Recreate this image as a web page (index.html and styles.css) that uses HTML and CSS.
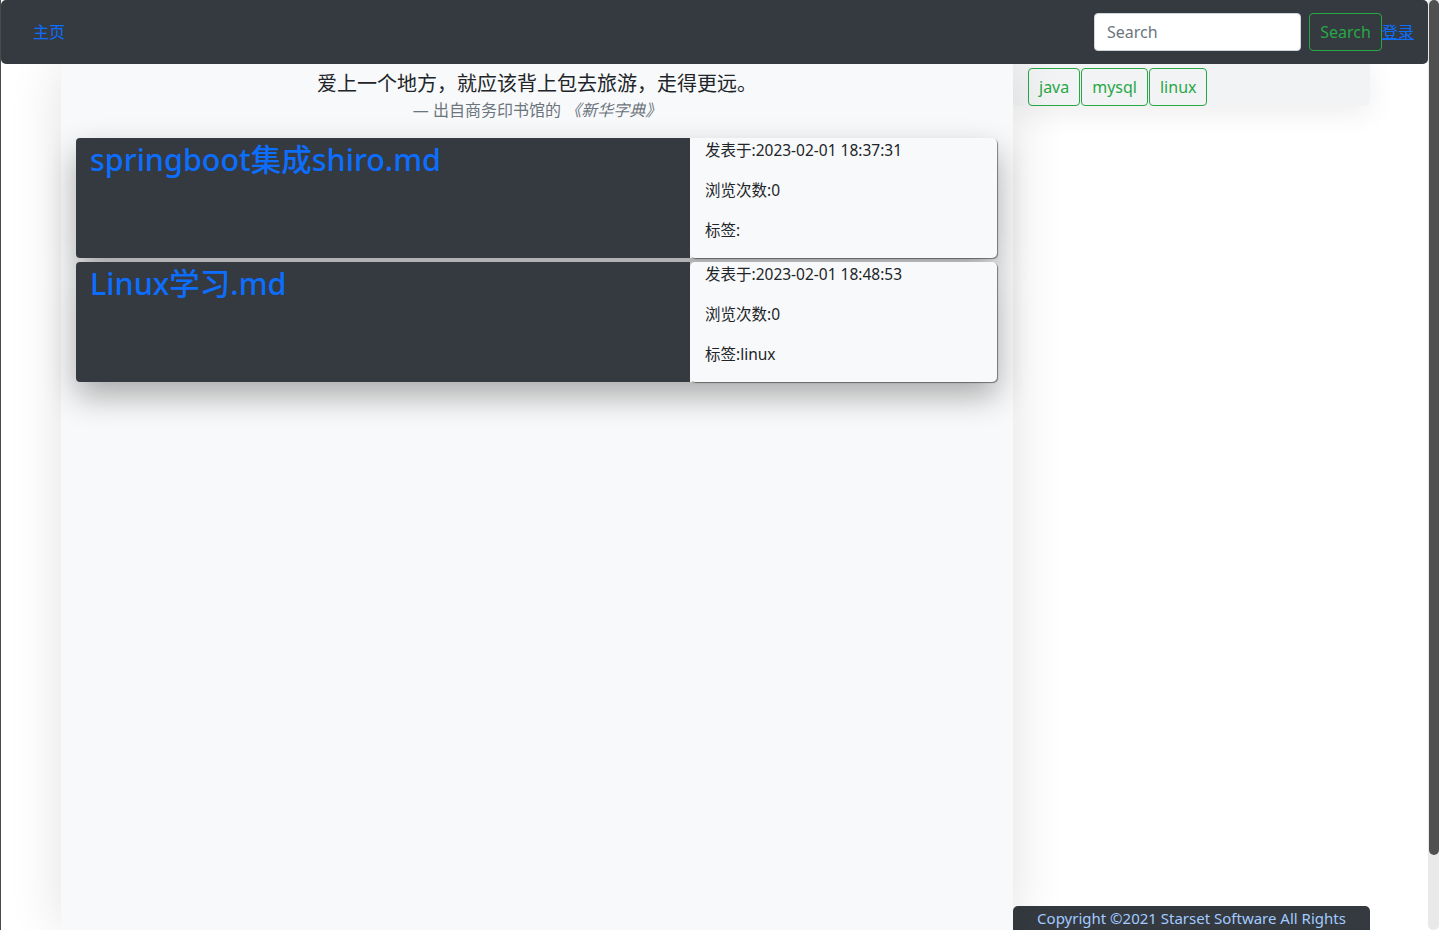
FILE: index.html
```html
<!DOCTYPE html>
<html lang="zh-CN">
<head>
<meta charset="utf-8">
<title>首页</title>
<link rel="stylesheet" href="styles.css">
</head>
<body>
<div class="frame">
  <div class="viewport">
    <nav class="navbar">
      <a class="nav-home" href="#">主页</a>
      <form class="nav-search">
        <input class="search-input" type="text" placeholder="Search">
        <button class="btn-search" type="button">Search</button>
      </form>
      <a class="nav-login" href="#">登录</a>
    </nav>
    <div class="layout">
      <div class="gutter"></div>
      <main class="main">
        <figure class="quote">
          <blockquote class="quote-text">爱上一个地方，就应该背上包去旅游，走得更远。</blockquote>
          <figcaption class="quote-source">— 出自商务印书馆的 <cite>《新华字典》</cite></figcaption>
        </figure>
        <div class="posts">
          <article class="post">
            <div class="post-title-box"><a class="post-title" href="#">springboot集成shiro.md</a></div>
            <div class="post-meta">
              <p>发表于:2023-02-01 18:37:31</p>
              <p>浏览次数:0</p>
              <p>标签:</p>
            </div>
          </article>
          <article class="post">
            <div class="post-title-box"><a class="post-title" href="#">Linux学习.md</a></div>
            <div class="post-meta">
              <p>发表于:2023-02-01 18:48:53</p>
              <p>浏览次数:0</p>
              <p>标签:linux</p>
            </div>
          </article>
        </div>
      </main>
      <aside class="side">
        <div class="tags">
          <button class="tag" type="button">java</button><button class="tag" type="button">mysql</button><button class="tag" type="button">linux</button>
        </div>
        <div class="side-fill"></div>
        <footer class="footer">Copyright ©2021 Starset Software All Rights</footer>
      </aside>
      <div class="right-gap"></div>
    </div>
  </div>
  <div class="scrollbar"><div class="thumb"></div></div>
</div>
</body>
</html>
```
FILE: styles.css
```css
* { box-sizing: border-box; }
html, body { margin: 0; padding: 0; }
body {
  height: 930px;
  overflow: hidden;
  background: #ffffff;
  border-left: 1px solid #4a4a4a;
  font-family: "Noto Sans", "Noto Sans CJK SC", sans-serif;
  font-size: 16px;
  line-height: 1.5;
  color: #212529;
}
.frame { display: flex; height: 930px; }
.viewport { flex: 1; display: flex; flex-direction: column; min-width: 0; }
.navbar {
  height: 64px;
  flex: 0 0 64px;
  background: #343a40;
  border-radius: 5px;
  display: flex;
  align-items: center;
  padding: 0 0 0 32px;
  position: relative;
  z-index: 3;
}
.nav-home { color: #0d6efd; text-decoration: none; font-size: 16px; }
.nav-search { margin-left: auto; display: flex; align-items: center; gap: 8px; }
.search-input {
  width: 207px; height: 38px;
  border: 1px solid #ced4da; border-radius: 4px;
  padding: 6px 12px;
  font-family: inherit; font-size: 16px; color: #495057;
  background: #fff;
}
.search-input::placeholder { color: #6c757d; }
.btn-search {
  width: 73px; height: 38px;
  border: 1px solid #28a745; border-radius: 4px;
  background: transparent; color: #28a745;
  font-family: inherit; font-size: 16px; padding: 0;
}
.nav-login { color: #0d6efd; text-decoration: underline; font-size: 16px; margin-right: 14px; }
.layout { flex: 1; display: flex; min-height: 0; }
.gutter { flex: 0 0 60px; }
.main {
  flex: 0 0 952px;
  background: #f8f9fa;
  box-shadow: 0 0 50px rgba(0,0,0,0.12);
  position: relative; z-index: 1;
  padding-top: 5px;
}
.quote { margin: 0; text-align: center; }
.quote-text { margin: 0; font-size: 20px; line-height: 30px; color: #212529; }
.quote-source { font-size: 16px; line-height: 22px; color: #6c757d; }
.quote-source cite { font-style: italic; }
.posts { padding: 17px 16px 0 15px; }
.post {
  display: flex; height: 120px; margin-bottom: 4px;
  border-radius: 4px;
  box-shadow: 0 14px 32px rgba(0,0,0,0.32);
}
.post-title-box {
  flex: 0 0 614px;
  background: #343a40;
  border-radius: 4px 0 0 4px;
  padding: 0 14px;
}
.post-title { font-size: 30.5px; line-height: 42px; color: #0d6efd; text-decoration: none; font-weight: 500; }
.post-meta {
  flex: 1;
  background: #f8f9fa;
  border-radius: 5px;
  padding: 0 15px;
  box-shadow: 1px 1px 1px rgba(0,0,0,0.45);
  font-size: 15.5px;
}
.post-meta p { margin: 0 0 16px; line-height: 24px; }
.side { flex: 0 0 357px; display: flex; flex-direction: column; }
.tags {
  background: #f1f3f5;
  border-radius: 0 0 5px 5px;
  padding: 4px 15px 0;
  height: 42px;
  display: flex; gap: 1px;
  box-shadow: 0 6px 30px rgba(0,0,0,0.08);
}
.tag {
  height: 38px; padding: 0 10px;
  border: 1px solid #28a745; border-radius: 4px;
  background: transparent; color: #28a745;
  font-family: inherit; font-size: 16px;
}
.side-fill { flex: 1; }
.footer {
  height: 24px; flex: 0 0 24px;
  background: #343a40;
  border-radius: 5px 5px 0 0;
  color: #a3cbff;
  text-align: center;
  font-size: 15px; line-height: 24px;
  overflow: hidden;
}
.right-gap { flex: 1; }
.scrollbar {
  flex: 0 0 11px;
  background: #e9e9e9;
  border-radius: 0 0 6px 6px;
  display: flex; flex-direction: column;
}
.thumb { height: 855px; background: #505050; border-radius: 5px; margin-left: 1px; }
```
